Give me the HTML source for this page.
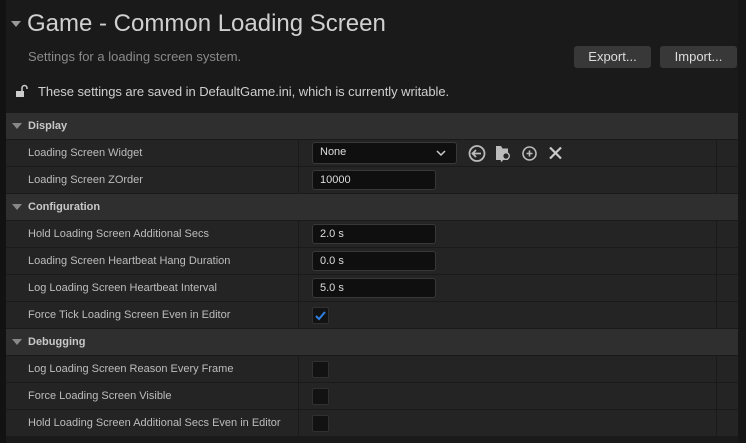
<!DOCTYPE html>
<html><head><style>
*{margin:0;padding:0;box-sizing:border-box}
body{width:746px;height:443px;background:#1a1a1a;font-family:"Liberation Sans",sans-serif;color:#c0c0c0;position:relative;overflow:hidden}
.strip{position:absolute;left:0;top:0;width:6px;height:443px;background:#121212}
.sb{position:absolute;right:0;top:0;width:8px;height:443px;background:#161616}
.title{position:absolute;left:27px;top:10px;font-size:24px;color:#d0d0d0}
.tri{position:absolute;width:0;height:0;border-left:5px solid transparent;border-right:5px solid transparent;border-top:6px solid #999}
.desc{position:absolute;left:28px;top:49px;font-size:13px;color:#8a8a8a}
.btn{position:absolute;top:46px;height:22px;background:#383838;border-radius:3px;font-size:13px;color:#ddd;text-align:center;line-height:22px}
.note{position:absolute;left:38px;top:84px;font-size:13px;color:#cfcfcf;letter-spacing:-0.05px}
.row{position:absolute;left:6px;width:732px;height:26px;background:#242424;font-size:11px;color:#bdbdbd}
.row .l{position:absolute;left:22px;top:7px}
.row .d{position:absolute;left:292px;top:0;width:1px;height:26px;background:#1a1a1a}
.row .d2{position:absolute;left:710px;top:0;width:1px;height:26px;background:#1a1a1a}
.hdr{position:absolute;left:6px;width:732px;height:26px;background:#2f2f2f;font-size:11px;font-weight:bold;color:#c8c8c8}
.hdr span{position:absolute;left:22px;top:7px}
.hdr .tri{left:6px;top:10px;border-top-color:#888}
.inp{position:absolute;left:306px;top:3px;width:124px;height:20px;background:#0f0f0f;border:1px solid #383838;border-radius:3px;font-size:11px;color:#ddd;padding:3px 0 0 7px}
.cb{position:absolute;left:306px;top:5px;width:17px;height:17px;background:#121212;border:1px solid #303030;border-radius:2px}
</style></head><body>
<div class="strip"></div><div class="sb"></div>
<div class="tri" style="left:11px;top:21px"></div>
<div class="title">Game - Common Loading Screen</div>
<div class="desc">Settings for a loading screen system.</div>
<div class="btn" style="left:574px;width:77px">Export...</div>
<div class="btn" style="left:660px;width:77px">Import...</div>
<svg style="position:absolute;left:15px;top:84px" width="14" height="14" viewBox="0 0 14 14"><rect x="1" y="7" width="8" height="6" fill="#ccc"/><path d="M7 7V4a2.5 2.5 0 0 1 5 0v1" stroke="#ccc" stroke-width="1.5" fill="none"/></svg>
<div class="note">These settings are saved in DefaultGame.ini, which is currently writable.</div>

<div class="hdr" style="top:113px"><div class="tri"></div><span>Display</span></div>
<div class="row" style="top:140px"><span class="l">Loading Screen Widget</span><div class="d"></div><div class="d2"></div>
<div class="inp" style="width:145px;height:22px;top:2px;font-size:11px">None<svg style="position:absolute;right:10px;top:7px" width="10" height="7"><path d="M1 1l4 4 4-4" stroke="#ccc" stroke-width="1.5" fill="none"/></svg></div>
<svg style="position:absolute;left:456px;top:3px" width="104" height="21" viewBox="0 0 104 21"><circle cx="15" cy="10.5" r="7.5" stroke="#bbb" stroke-width="1.8" fill="none"/><path d="M19 10.5H11M14 7l-3.5 3.5 3.5 3.5" stroke="#bbb" stroke-width="1.8" fill="none"/><path d="M34 3h5l1.5 2.5H46V17H34z" fill="#bbb"/><circle cx="44" cy="13" r="3.3" stroke="#bbb" stroke-width="1.4" fill="#242424"/><path d="M41.5 15.5l-2.5 3" stroke="#bbb" stroke-width="1.5"/><circle cx="67.5" cy="10.5" r="6.5" stroke="#bbb" stroke-width="1.6" fill="none"/><path d="M67.5 7.5v6M64.5 10.5h6" stroke="#bbb" stroke-width="1.6"/><path d="M88 4.5l11 11M99 4.5l-11 11" stroke="#ccc" stroke-width="2.2"/></svg></div>
<div class="row" style="top:167px"><span class="l">Loading Screen ZOrder</span><div class="d"></div><div class="d2"></div><div class="inp">10000</div></div>

<div class="hdr" style="top:194px"><div class="tri"></div><span>Configuration</span></div>
<div class="row" style="top:221px"><span class="l">Hold Loading Screen Additional Secs</span><div class="d"></div><div class="d2"></div><div class="inp">2.0 s</div></div>
<div class="row" style="top:248px"><span class="l">Loading Screen Heartbeat Hang Duration</span><div class="d"></div><div class="d2"></div><div class="inp">0.0 s</div></div>
<div class="row" style="top:275px"><span class="l">Log Loading Screen Heartbeat Interval</span><div class="d"></div><div class="d2"></div><div class="inp">5.0 s</div></div>
<div class="row" style="top:302px"><span class="l">Force Tick Loading Screen Even in Editor</span><div class="d"></div><div class="d2"></div><div class="cb"><svg width="15" height="15" viewBox="0 0 15 15"><path d="M3 8l3 3 6-7" stroke="#2f7fe0" stroke-width="2" fill="none"/></svg></div></div>

<div class="hdr" style="top:329px"><div class="tri"></div><span>Debugging</span></div>
<div class="row" style="top:356px"><span class="l">Log Loading Screen Reason Every Frame</span><div class="d"></div><div class="d2"></div><div class="cb"></div></div>
<div class="row" style="top:383px"><span class="l">Force Loading Screen Visible</span><div class="d"></div><div class="d2"></div><div class="cb"></div></div>
<div class="row" style="top:410px"><span class="l">Hold Loading Screen Additional Secs Even in Editor</span><div class="d"></div><div class="d2"></div><div class="cb"></div></div>
</body></html>
